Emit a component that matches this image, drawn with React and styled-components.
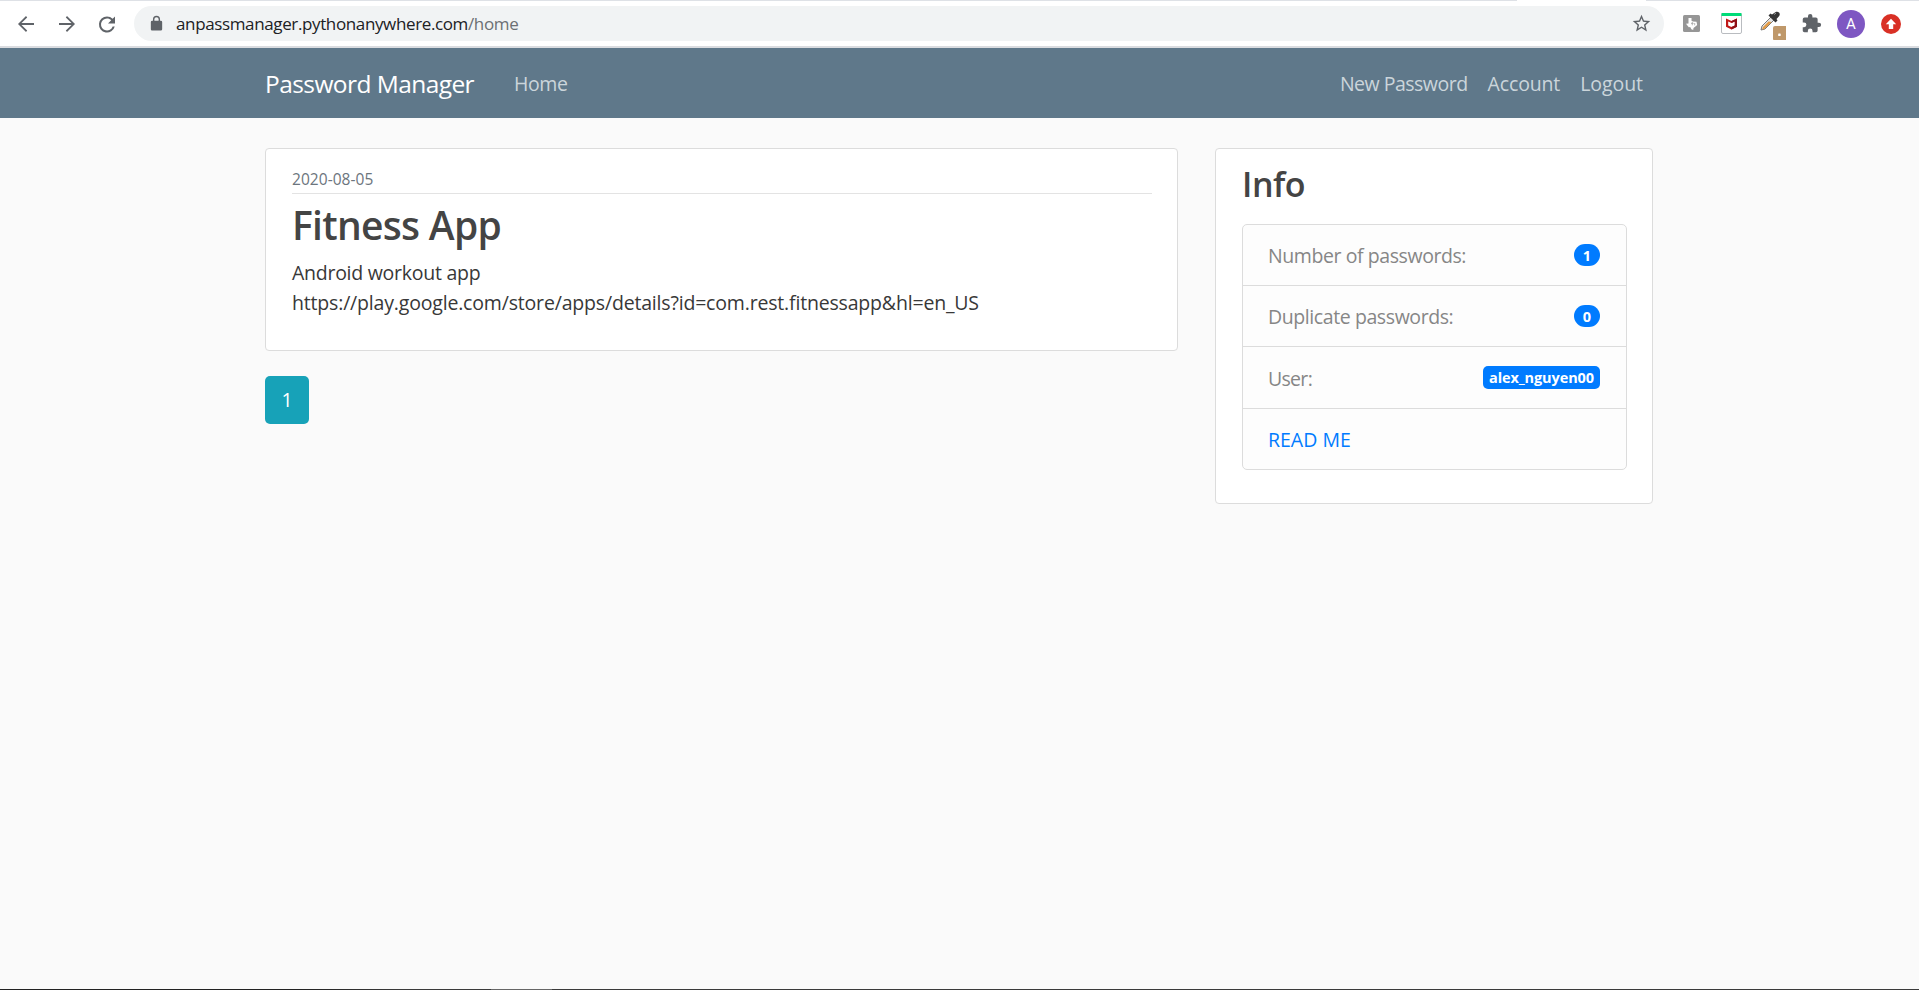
import React from "react";
import styled, { createGlobalStyle } from "styled-components";

const Global = createGlobalStyle`
  *, *::before, *::after { box-sizing: border-box; }
  html, body, #root { height: 100%; margin: 0; }
  body {
    background: #fafafa;
    color: #383838;
    font-family: "Open Sans", "Noto Sans", sans-serif;
    font-size: 19.5px;
    line-height: 30px;
    overflow: hidden;
  }
  a { text-decoration: none; color: inherit; }
  h2, h3, p, ul { margin: 0; padding: 0; }
`;

const Screen = styled.div`
  height: 990px;
  display: flex;
  flex-direction: column;
`;

const BrowserEdge = styled.div`
  height: 1px;
  flex: none;
  background: linear-gradient(90deg, #dee1e6 1517px, #fff 1517px, #fff 1646px, #dee1e6 1646px);
`;

const BrowserBar = styled.div`
  height: 47px;
  flex: none;
  display: flex;
  align-items: center;
  padding: 0 8px 0 14px;
  background: #fff;
  border-bottom: 2px solid #dadce0;
`;

const ToolBar = styled.div`
  width: 120px;
  display: flex;
  flex: none;
  gap: 16.5px;
`;

const ToolButton = styled.span`
  width: 24px;
  height: 24px;
  display: flex;
  flex: none;
`;

const AddressBar = styled.div`
  width: 1530px;
  height: 35px;
  flex: none;
  display: flex;
  align-items: center;
  padding: 0 12px 0 14px;
  border-radius: 18px;
  background: #f1f3f4;
`;

const Url = styled.span`
  flex: 1;
  margin-left: 11px;
  color: #202124;
  font-size: 17px;
  span span { color: #6b6f73; }
`;

const Extensions = styled.div`
  display: flex;
  flex: none;
  margin-left: 7px;
`;

const ExtensionSlot = styled.span`
  width: 40px;
  height: 40px;
  display: flex;
  align-items: center;
  justify-content: center;
`;

const Avatar = styled.span`
  width: 28px;
  height: 28px;
  border-radius: 50%;
  background: #7e57c2;
  color: #fff;
  font-family: Roboto, sans-serif;
  font-size: 15px;
  line-height: 29px;
  text-align: center;
`;

const Navbar = styled.nav`
  height: 70px;
  flex: none;
  background: #5f788a;
`;

const Container = styled.div`
  width: 1388px;
  margin-left: 265px;
  display: flex;
`;

const NavInner = styled(Container)`
  height: 71px;
  align-items: center;
  padding-right: 10px;
`;

const T = styled.span`
  letter-spacing: ${(p) => p.$track || 0}px;
  white-space: nowrap;
`;

const Brand = styled.a`
  font-size: 24.5px;
  color: #fff;
  margin-right: 40px;
  padding-top: 1px;
  white-space: nowrap;
`;

const NavLink = styled.a`
  color: #cbd5db;
  margin-left: ${(p) => (p.$gap ? "20px" : "0")};
  white-space: nowrap;
`;

const Spacer = styled.div`
  flex: 1;
`;

const Page = styled(Container)`
  flex: 1;
  align-items: flex-start;
  justify-content: space-between;
  padding-top: 30px;
`;

const Card = styled.section`
  width: ${(p) => p.$width}px;
  height: ${(p) => p.$height}px;
  background: #fff;
  border: 1px solid #dcdcdc;
  border-radius: 4px;
  padding: 15px 25px 15px 26px;
`;

const Meta = styled.div`
  height: 30px;
  border-bottom: 1px solid #e3e3e3;
  color: #6c757d;
  font-size: 15.5px;
  line-height: 30px;
`;

const Title = styled.h2`
  font-size: 39px;
  font-weight: 600;
  line-height: 48px;
  margin: 7px 0 9px;
  color: #444;
`;

const Body = styled.p`
  white-space: nowrap;
`;

const PageButton = styled.a`
  width: 44px;
  height: 48px;
  margin-top: 25px;
  display: flex;
  align-items: center;
  justify-content: center;
  border-radius: 5px;
  background: #17a2b8;
  color: #fff;
`;

const InfoTitle = styled.h3`
  font-size: 34px;
  font-weight: 600;
  line-height: 41px;
  color: #444;
`;

const List = styled.ul`
  list-style: none;
  margin-top: 19px;
  border: 1px solid #dcdcdc;
  border-radius: 5px;
  background: #fdfdfd;
`;

const Item = styled.li`
  height: ${(p) => p.$height}px;
  display: flex;
  justify-content: space-between;
  padding: ${(p) => (p.$tall ? 17 : 16)}px 26px 0 25px;
  color: #868686;
  & + & { border-top: 1px solid #dcdcdc; }
`;

const Badge = styled.span`
  height: ${(p) => (p.$pill ? 22 : 23)}px;
  width: ${(p) => p.$width}px;
  margin-top: ${(p) => (p.$pill ? 3 : 2)}px;
  border-radius: ${(p) => (p.$pill ? "12px" : "5px")};
  background: #007bff;
  color: #fff;
  font-size: 14.5px;
  font-weight: 700;
  line-height: 23px;
  text-align: center;
`;

const ReadMe = styled.a`
  color: #007bff;
`;

const Taskbar = styled.div`
  height: 1px;
  flex: none;
  background: linear-gradient(90deg, #222 300px, #3a3a3a 400px, #3a3a3a 491px, #666 491px, #666 552px, #3a3a3a 552px);
`;

const Icon = ({ d, size = 24, color = "#5f6368" }) => (
  <svg width={size} height={size} viewBox="0 0 24 24" fill={color}><path d={d} /></svg>
);

const TexasIcon = () => (
  <svg width="17" height="17" viewBox="0 0 17 17">
    <rect width="17" height="17" rx="1.500" fill="#969696" />
    <path d="M5.500 3h3v2.800l1.500.7 3.500.3.700 3.200-1.800 1.500-1.900 1.600-.3 2-1.800-.8-1.200-2.300-1.400.3L3 8.800l2.500-.4z" fill="#fff" />
    <path d="M9.300 7v3.300M8 8.400h2.600M11.700 8v2.300" stroke="#a2a2a2" strokeWidth=".8" />
  </svg>
);

const ShieldIcon = () => (
  <svg width="21" height="21" viewBox="0 0 21 21">
    <rect x=".5" y=".5" width="20" height="20" rx="1.500" fill="#fff" stroke="#b9bcc0" />
    <path d="M.5 0h20v3H.5z" fill="#00dc78" />
    <path d="M5 5.500l5.500 2.400L16 5.500v8.200L10.500 16.500 5 13.700zM7.200 8.500v4l3.300 1.600 3.300-1.600v-4l-3.300 1.500z" fill="#c01818" fillRule="evenodd" />
    <path d="M10.500 7.900L16 5.500v8.200l-5.500 2.800v-2.400l3.300-1.600v-4l-3.300 1.500z" fill="#8d1016" />
  </svg>
);

const DropperIcon = () => (
  <svg width="30" height="32" viewBox="0 0 30 32">
    <path d="M5 22l1-4 9-9 3 3-9 9z" fill="#e4e4e4" stroke="#777" strokeWidth="1" />
    <path d="M6 21.500l1-2.500 5.500-5.500 3 .5-7 7z" fill="#e29a45" />
    <path d="M12.500 7.500l2-2 1.500 1 3.300-2.300c3-1.500 5.900 1.200 3.700 4l-2.500 2.800 1 1.500-2 2z" fill="#353535" />
    <path d="M18 6.500l2-1.300" stroke="#999" strokeWidth="1" />
    <rect x="17" y="18" width="14.500" height="14.500" rx="2" fill="#bf986a" />
    <rect x="22.200" y="25.500" width="2.500" height="2.500" rx=".6" fill="#fff" />
  </svg>
);

const UpdateIcon = () => (
  <svg width="20" height="20" viewBox="0 0 20 20">
    <circle cx="10" cy="10" r="10" fill="#d93025" />
    <path d="M10 4.700l5.200 5.600h-3V15H7.800v-4.700h-3z" fill="#fff" />
  </svg>
);

export default function App() {
  return (
    <Screen>
      <Global />
      <BrowserEdge />
      <BrowserBar>
        <ToolBar>
          <ToolButton><Icon d="M20 11.100H7.500l5.700-5.700L12 4l-8 8 8 8 1.200-1.400-5.700-5.700H20z" /></ToolButton>
          <ToolButton><Icon d="M12 4l-1.200 1.400 5.700 5.700H4v1.800h12.500l-5.700 5.700L12 20l8-8z" /></ToolButton>
          <ToolButton><Icon size={25} d="M17.650 6.350A7.960 7.960 0 0 0 12 4a8 8 0 1 0 7.730 10h-2.080A6 6 0 1 1 12 6c1.660 0 3.140.69 4.220 1.780L13 11h7V4z" /></ToolButton>
        </ToolBar>
        <AddressBar>
          <Icon size={17} d="M18 8h-1V6A5 5 0 0 0 7 6v2H6a2 2 0 0 0-2 2v10c0 1.100.9 2 2 2h12a2 2 0 0 0 2-2V10a2 2 0 0 0-2-2zM9 6a3 3 0 0 1 6 0v2H9z" />
          <Url><T $track={-0.37}>anpassmanager.pythonanywhere.com<span>/home</span></T></Url>
          <Icon size={21} d="M22 9.240l-7.190-.62L12 2 9.190 8.630 2 9.240l5.460 4.730L5.820 21 12 17.270 18.180 21l-1.630-7.030L22 9.240zM12 15.400l-3.760 2.270 1-4.280-3.320-2.880 4.380-.38L12 6.100l1.710 4.040 4.380.38-3.320 2.880 1 4.280L12 15.400z" />
        </AddressBar>
        <Extensions>
          <ExtensionSlot><TexasIcon /></ExtensionSlot>
          <ExtensionSlot><ShieldIcon /></ExtensionSlot>
          <ExtensionSlot><DropperIcon /></ExtensionSlot>
          <ExtensionSlot><Icon size={21} d="M20.500 11H19V7a2 2 0 0 0-2-2h-4V3.500a2.500 2.500 0 0 0-5 0V5H4a2 2 0 0 0-2 2v3.800h1.500a2.700 2.700 0 0 1 0 5.400H2V20c0 1.100.9 2 2 2h3.800v-1.500a2.700 2.700 0 0 1 5.400 0V22H17a2 2 0 0 0 2-2v-4h1.500a2.500 2.500 0 0 0 0-5z" /></ExtensionSlot>
          <ExtensionSlot><Avatar>A</Avatar></ExtensionSlot>
          <ExtensionSlot><UpdateIcon /></ExtensionSlot>
        </Extensions>
      </BrowserBar>
      <Navbar>
        <NavInner>
          <Brand><T $track={-0.57}>Password Manager</T></Brand>
          <NavLink><T $track={-0.4}>Home</T></NavLink>
          <Spacer />
          <NavLink><T $track={-0.5}>New Password</T></NavLink>
          <NavLink $gap><T $track={-0.15}>Account</T></NavLink>
          <NavLink $gap><T $track={-0.05}>Logout</T></NavLink>
        </NavInner>
      </Navbar>
      <Page>
        <div>
          <Card $width={913} $height={203}>
            <Meta><T $track={0.05}>2020-08-05</T></Meta>
            <Title><T $track={-0.7}>Fitness App</T></Title>
            <Body><T $track={-0.26}>Android workout app</T></Body>
            <Body><T $track={-0.18}>https://play.google.com/store/apps/details?id=com.rest.fitnessapp&amp;hl=en_US</T></Body>
          </Card>
          <PageButton>1</PageButton>
        </div>
        <Card as="aside" $width={438} $height={356}>
          <InfoTitle><T $track={-0.5}>Info</T></InfoTitle>
          <List>
            <Item $height={60}><T $track={-0.42}>Number of passwords:</T><Badge $pill $width={26}>1</Badge></Item>
            <Item $height={61}><T $track={-0.41}>Duplicate passwords:</T><Badge $pill $width={26}>0</Badge></Item>
            <Item $height={62} $tall><T $track={-0.7}>User:</T><Badge $width={117}><T $track={-0.1}>alex_nguyen00</T></Badge></Item>
            <Item $height={61}><ReadMe><T>READ ME</T></ReadMe></Item>
          </List>
        </Card>
      </Page>
      <Taskbar />
    </Screen>
  );
}
